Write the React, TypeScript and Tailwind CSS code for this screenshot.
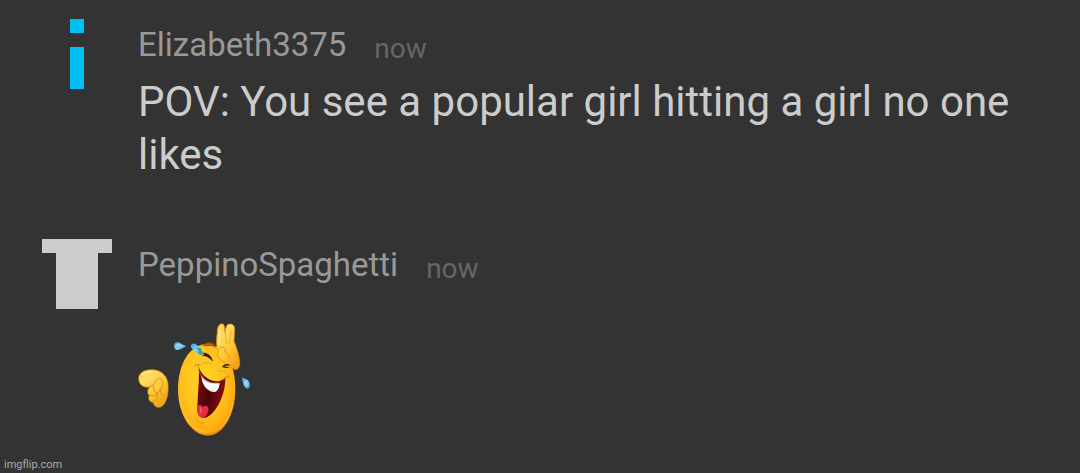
import type { ReactNode } from "react"

const InfoAvatar = () => (
  <svg viewBox="0 0 5 5" className="size-[70px] shrink-0 fill-[#00bff3]" shapeRendering="crispEdges" aria-hidden="true">
    <path d="M2 0h1v1H2zM2 2h1v3H2z" />
  </svg>
)

const TopAvatar = () => (
  <svg viewBox="0 0 5 5" className="size-[70px] shrink-0 fill-[#cccccc]" shapeRendering="crispEdges" aria-hidden="true">
    <path d="M0 0h5v1H4v4H1V1H0z" />
  </svg>
)

const LaughingEmoji = () => (
  <svg viewBox="24 24 342 342" className="size-[114px]" role="img" aria-label="Laughing and pointing">
    <defs>
      <radialGradient id="face" cx="0.45" cy="0.4" r="0.62">
        <stop offset="0" stopColor="#ffd42a" />
        <stop offset="0.6" stopColor="#ffc21c" />
        <stop offset="0.88" stopColor="#fdad12" />
        <stop offset="1" stopColor="#ea860a" />
      </radialGradient>
      <linearGradient id="hand" x1="0" y1="0" x2="0.7" y2="1">
        <stop offset="0" stopColor="#ffd24a" />
        <stop offset="0.3" stopColor="#ffdb62" />
        <stop offset="0.65" stopColor="#ffc52e" />
        <stop offset="1" stopColor="#f2a01a" />
      </linearGradient>
      <linearGradient id="mouth" x1="0" y1="0" x2="1" y2="0.3">
        <stop offset="0" stopColor="#8c0a0a" />
        <stop offset="0.5" stopColor="#490306" />
        <stop offset="1" stopColor="#870d0c" />
      </linearGradient>
      <linearGradient id="tear" x1="0" y1="0" x2="1" y2="1">
        <stop offset="0" stopColor="#38a3dc" />
        <stop offset="0.5" stopColor="#86d2f4" />
        <stop offset="1" stopColor="#3497d2" />
      </linearGradient>
      <linearGradient id="tooth" x1="0" y1="0" x2="0" y2="1">
        <stop offset="0" stopColor="#dfe3ea" />
        <stop offset="0.5" stopColor="#ffffff" />
        <stop offset="1" stopColor="#eceff4" />
      </linearGradient>
    </defs>

    {/* head */}
    <path d="M231 87C180 88 143 146 144 226C145 303 186 361 233 362C280 362 315 300 316 226C317 146 283 87 231 87Z" fill="url(#face)" />
    <path d="M150 250C159 312 194 351 234 352C274 351 300 311 309 264" fill="none" stroke="#ffd34b" strokeWidth="4" opacity="0.45" />
    <path d="M217 92Q231 77 250 84L259 99Q244 88 227 94Z" fill="#984911" />
    <path d="M221 92Q235 83 249 90" fill="none" stroke="#c5731b" strokeWidth="3" />

    {/* mouth */}
    <path d="M207 159C207 210 203 244 202 277C201 299 208 309 222 308C251 306 287 247 286 188C269 207 226 202 207 159Z" fill="url(#mouth)" />
    <path d="M205 271C212 269 216 272 219 277C227 266 239 275 235 289C231 302 225 308 219 308C205 307 202 295 202 281Z" fill="#e52d42" />
    <path d="M212 279Q214 286 213 292" fill="none" stroke="#ff7b82" strokeWidth="3" strokeLinecap="round" />
    <path d="M214 179C224 198 247 207 269 204C268 219 262 230 254 231C237 232 214 214 214 179Z" fill="url(#tooth)" />
    <path d="M205 154C208 202 250 219 286 188Q293 181 297 189" fill="none" stroke="#b8620a" strokeWidth="2" strokeLinecap="round" />
    <path d="M210 152Q224 136 244 147M265 168Q288 163 298 186" fill="none" stroke="#eda012" strokeWidth="3" strokeLinecap="round" />
    <path d="M208 148Q196 147 194 154" fill="none" stroke="#ca7b0c" strokeWidth="3" strokeLinecap="round" />
    <path d="M198 313Q207 325 222 324" fill="none" stroke="#e8a114" strokeWidth="4" strokeLinecap="round" />

    {/* raised hand */}
    <path d="M261 96C258 83 260 65 262 50C260 34 273 20 281 29C285 34 284 43 285 54C286 40 289 25 301 27C312 27 315 37 314 47L312 79C319 96 327 119 329 139C331 157 323 166 314 163C301 161 291 144 276 136C265 132 260 120 266 109Q262 105 261 96Z" fill="url(#hand)" stroke="#d98a12" strokeWidth="2" />
    <path d="M286 54Q287 70 289 85M304 46Q299 68 298 84" fill="none" stroke="#dc9a20" strokeWidth="2" strokeLinecap="round" />
    <path d="M264 104C276 90 288 96 285 108C289 117 296 119 298 128" fill="none" stroke="#c98518" strokeWidth="2" strokeLinecap="round" />
    <path d="M270 44Q267 66 269 85" fill="none" stroke="#ffe88c" strokeWidth="4" strokeLinecap="round" />

    {/* closed eyes */}
    <path d="M217 113Q242 113 248 139Q236 122 217 122Q229 118 217 113Z" fill="#291807" stroke="#291807" strokeWidth="1" strokeLinejoin="round" />
    <path d="M276 156Q283 144 297 148L299 152Q287 150 282 154Q291 154 299 159Q287 160 276 156Z" fill="#291807" />

    {/* pointing hand */}
    <path d="M26 189C27 173 44 163 65 164C89 164 111 177 114 207C117 240 107 276 87 277C77 277 71 270 70 263C58 260 53 251 58 242C50 234 53 221 60 216C43 219 25 211 26 189Z" fill="url(#hand)" stroke="#d98b12" strokeWidth="2" />
    <path d="M57 216Q67 214 73 205Q77 190 91 190Q105 198 95 216Q91 232 82 234Q69 230 70 211M58 239Q71 249 82 234Q85 248 75 259Q71 263 66 260M90 223Q91 239 104 243" fill="none" stroke="#bf8212" strokeWidth="2" strokeLinecap="round" />
    <path d="M38 180Q46 171 63 171" fill="none" stroke="#ffea94" strokeWidth="5" strokeLinecap="round" />

    {/* tears */}
    <path d="M170 94C155 90 150 81 141 82C130 83 130 98 138 104C149 108 158 97 170 94Z" fill="url(#tear)" />
    <path d="M217 121C205 119 194 110 190 103C181 100 180 89 188 86C197 84 204 95 212 97Q219 108 217 121Z" fill="url(#tear)" />
    <path d="M198 98Q207 104 207 117L218 122L212 99Z" fill="#27a6b0" />
    <path d="M335 186C338 198 340 217 352 221C361 220 362 207 355 197C349 190 340 192 335 186Z" fill="url(#tear)" />
    <path d="M139 90Q145 87 150 91M347 201Q352 206 352 211" fill="none" stroke="#b5e6fa" strokeWidth="3" strokeLinecap="round" />
  </svg>
)

type CommentProps = {
  avatar: ReactNode
  author: string
  children: ReactNode
}

const Comment = ({ avatar, author, children }: CommentProps) => (
  <article className="flex items-start gap-[26px]">
    {avatar}
    <div className="min-w-0 flex-1 pt-1.5">
      <header className="flex items-end gap-7">
        <h2 className="text-[33px] leading-10 text-[#999999]">{author}</h2>
        <time className="text-[28px] leading-8 text-[#666666]">now</time>
      </header>
      {children}
    </div>
  </article>
)

const App = () => {
  return (
    <div className="flex min-h-screen flex-col bg-[#333333] font-['Roboto',sans-serif]">
      <main className="flex flex-1 flex-col gap-[58px] pt-[19px] pr-10 pl-[42px]">
        <Comment avatar={<InfoAvatar />} author="Elizabeth3375">
          <p className="mt-2.5 text-[42px] leading-[53px] text-[#cccccc]">
            POV: You see a popular girl hitting a girl no one likes
          </p>
        </Comment>
        <Comment avatar={<TopAvatar />} author="PeppinoSpaghetti">
          <div className="mt-[38px]">
            <LaughingEmoji />
          </div>
        </Comment>
      </main>
      <footer className="px-1 text-[11px] leading-4 text-[#aaaaaa]">imgflip.com</footer>
    </div>
  )
}

export default App
